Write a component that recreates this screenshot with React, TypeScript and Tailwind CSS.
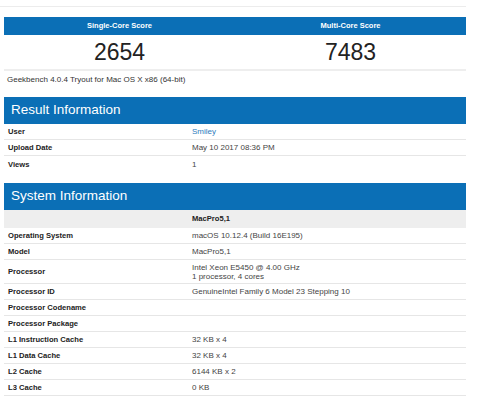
const blue = "bg-[#0b6fb6]";

type Row = { label: string; value?: string; lines?: string[]; link?: boolean };

const resultRows: Row[] = [
  { label: "User", value: "Smiley", link: true },
  { label: "Upload Date", value: "May 10 2017 08:36 PM" },
  { label: "Views", value: "1" },
];

const systemRows: Row[] = [
  { label: "Operating System", value: "macOS 10.12.4 (Build 16E195)" },
  { label: "Model", value: "MacPro5,1" },
  { label: "Processor", lines: ["Intel Xeon E5450 @ 4.00 GHz", "1 processor, 4 cores"] },
  { label: "Processor ID", value: "GenuineIntel Family 6 Model 23 Stepping 10" },
  { label: "Processor Codename", value: "" },
  { label: "Processor Package", value: "" },
  { label: "L1 Instruction Cache", value: "32 KB x 4" },
  { label: "L1 Data Cache", value: "32 KB x 4" },
  { label: "L2 Cache", value: "6144 KB x 2" },
  { label: "L3 Cache", value: "0 KB" },
];

function InfoRow({ row, last }: { row: Row; last?: boolean }) {
  const tall = !!row.lines;
  return (
    <div
      className={`grid grid-cols-[188px_1fr] items-center leading-[9px] ${
        tall ? "h-[24px]" : "h-[16px]"
      } ${last ? "" : "border-b border-[#e6e6e6]"}`}
    >
      <div className="pl-[4px] text-[7.6px] font-bold text-[#222]">{row.label}</div>
      <div className={`text-[8px] ${row.link ? "text-[#2b7bbd]" : "text-[#444]"}`}>
        {row.lines ? row.lines.map((l) => <div key={l}>{l}</div>) : row.value}
      </div>
    </div>
  );
}

function SectionHeader({ title }: { title: string }) {
  return (
    <div className={`${blue} flex h-[27px] items-center px-[7px] text-[13.5px] text-white`}>
      {title}
    </div>
  );
}

export default function App() {
  return (
    <div className="h-[399px] w-[480px] overflow-hidden bg-white font-['Liberation_Sans',Arial,sans-serif]">
      <div className="h-[7px] w-[466px] border-b border-[#ececec]" />

      <div className="ml-[4px] mt-[10px] w-[462px]">
        <div className="grid grid-cols-2 border-b-2 border-[#eeeeee]">
          {[
            ["Single-Core Score", "2654"],
            ["Multi-Core Score", "7483"],
          ].map(([title, score]) => (
            <div key={title}>
              <div
                className={`${blue} flex h-[18px] items-center justify-center text-[7.5px] font-bold text-white`}
              >
                {title}
              </div>
              <div className="flex h-[34px] items-center justify-center text-[23px] text-[#222]">
                {score}
              </div>
            </div>
          ))}
        </div>

        <div className="h-[26px] pl-[3px] pt-[4px] text-[8px] leading-[9px] text-[#333]">
          Geekbench 4.0.4 Tryout for Mac OS X x86 (64-bit)
        </div>

        <SectionHeader title="Result Information" />
        {resultRows.map((r, i) => (
          <InfoRow key={r.label} row={r} last={i === resultRows.length - 1} />
        ))}

        <div className="mt-[11px]">
          <SectionHeader title="System Information" />
          <div className="grid h-[18px] grid-cols-[188px_1fr] items-center bg-[#eeeeee] text-[7.6px] font-bold text-[#222]">
            <div />
            <div>MacPro5,1</div>
          </div>
          {systemRows.map((r) => (
            <InfoRow key={r.label} row={r} />
          ))}
        </div>
      </div>
    </div>
  );
}
